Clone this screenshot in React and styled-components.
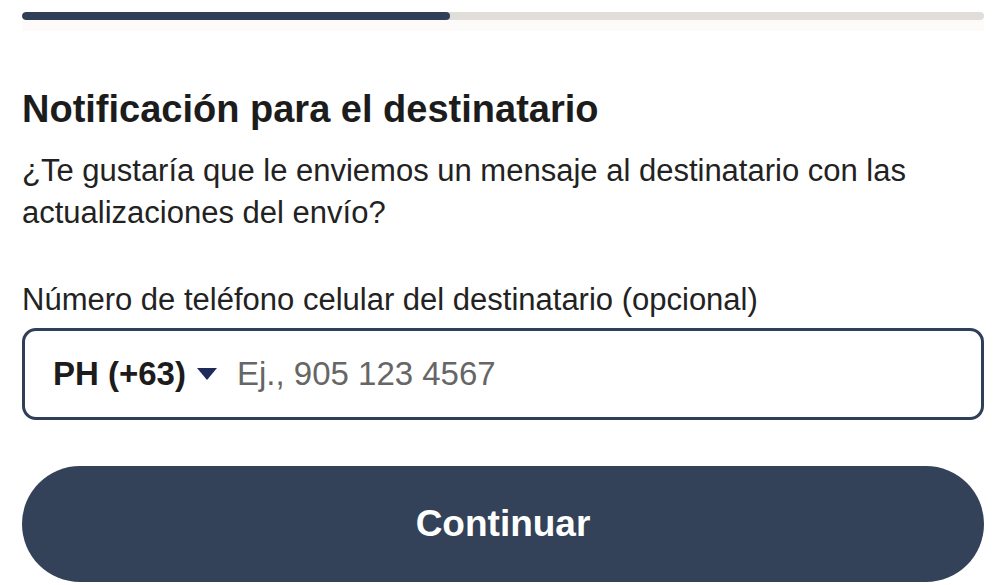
import React from 'react';
import styled, { createGlobalStyle } from 'styled-components';

const GlobalStyle = createGlobalStyle`
  html, body {
    margin: 0;
    padding: 0;
    background: #ffffff;
  }
  body {
    font-family: "Liberation Sans", Arial, sans-serif;
    color: #1f1f1f;
  }
  * { box-sizing: border-box; }
`;

const App = () => {
  // logic
  const progress = 44.5;

  // view
  return (
    <>
      <GlobalStyle />
      <Page>
        <ProgressWrap>
          <Track>
            <Fill style={{ width: `${progress}%` }} />
          </Track>
          <Shade />
        </ProgressWrap>
        <Content>
          <Title>Notificación para el destinatario</Title>
          <Desc>
            ¿Te gustaría que le enviemos un mensaje al destinatario con las actualizaciones del envío?
          </Desc>
          <Field>
            <Label>Número de teléfono celular del destinatario (opcional)</Label>
            <InputBox>
              <Country>
                PH (+63)
                <Caret viewBox="0 0 22 14" aria-hidden="true">
                  <path d="M1 1 H21 L11 13 Z" />
                </Caret>
              </Country>
              <Input placeholder="Ej., 905 123 4567" />
            </InputBox>
          </Field>
          <Button type="button">Continuar</Button>
        </Content>
      </Page>
    </>
  );
};

export default App;

const Page = styled.div`
  width: 1000px;
  height: 585px;
  padding: 12px 16px 0 22px;
  overflow: hidden;
`;

const ProgressWrap = styled.div`
  display: flex;
  flex-direction: column;
`;

const Track = styled.div`
  height: 8px;
  border-radius: 4px;
  background: #e1ddd8;
  overflow: hidden;
`;

const Fill = styled.div`
  height: 100%;
  border-radius: 4px;
  background: #2f3f57;
`;

const Shade = styled.div`
  height: 11px;
  background: #fcfbfa;
`;

const Content = styled.div`
  display: flex;
  flex-direction: column;
  padding-top: 56px;
`;

const Title = styled.h1`
  margin: 0;
  font-size: 38px;
  line-height: 44px;
  font-weight: 700;
  color: #1c1c1c;
`;

const Desc = styled.p`
  margin: 19px 0 0;
  font-size: 31px;
  line-height: 42px;
  color: #222222;
  max-width: 950px;
`;

const Field = styled.div`
  display: flex;
  flex-direction: column;
  margin-top: 46px;
`;

const Label = styled.label`
  font-size: 31px;
  line-height: 40px;
  color: #222222;
`;

const InputBox = styled.div`
  display: flex;
  align-items: center;
  gap: 19px;
  height: 92px;
  margin-top: 8px;
  padding: 0 28px;
  border: 3px solid #2f3f57;
  border-radius: 14px;
`;

const Country = styled.div`
  display: flex;
  align-items: center;
  gap: 10px;
  font-size: 33px;
  font-weight: 700;
  color: #1c1c1c;
  white-space: nowrap;
`;

const Caret = styled.svg`
  width: 22px;
  height: 14px;
  fill: #1d2a5a;
`;

const Input = styled.input`
  flex: 1;
  border: none;
  outline: none;
  background: transparent;
  font-family: inherit;
  font-size: 33px;
  color: #1c1c1c;
  padding: 0;
  &::placeholder {
    color: #666666;
  }
`;

const Button = styled.button`
  height: 116px;
  margin-top: 46px;
  border: none;
  border-radius: 58px;
  background: #334259;
  color: #ffffff;
  font-family: inherit;
  font-size: 37px;
  font-weight: 700;
  cursor: pointer;
`;
